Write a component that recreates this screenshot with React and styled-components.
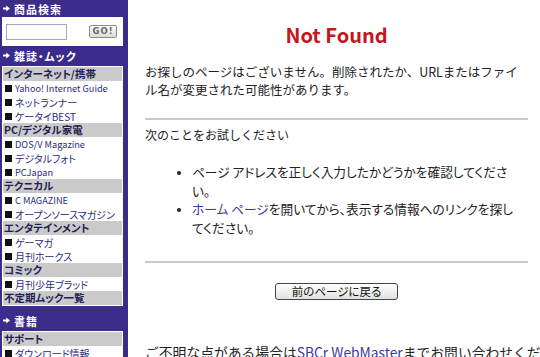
import styled, { createGlobalStyle } from "styled-components";

const GlobalStyle = createGlobalStyle`
  html, body {
    margin: 0;
    padding: 0;
    background: #ffffff;
    overflow: hidden;
  }
  body {
    font-family: "Noto Sans CJK JP", "Noto Sans", sans-serif;
  }
`;

const Page = styled.div`
  display: grid;
  grid-template-columns: 128px minmax(0, 1fr);
  width: 540px;
  height: 357px;
  overflow: hidden;
`;

const Sidebar = styled.aside`
  background: #3b2b8b;
  display: flex;
  flex-direction: column;
  padding: 0 5px 0 2px;
  font-feature-settings: "palt";
`;

const SectionTitle = styled.div`
  display: flex;
  align-items: center;
  gap: 4px;
  height: 17px;
  margin-top: ${({ $top }) => $top || 0}px;
  padding-left: 1px;
  color: #ffffff;
  font-size: 11px;
  font-weight: 700;
  letter-spacing: 1px;
  white-space: nowrap;
`;

const Arrow = () => (
  <svg width="7" height="7" viewBox="0 0 7 7">
    <path d="M0 2.5h3.2V0.4L7 3.5 3.2 6.6V4.5H0z" fill="#ffffff" />
  </svg>
);

const WhiteBox = styled.div`
  background: #ffffff;
  padding: 1px;
  margin-top: ${({ $top }) => $top || 0}px;
`;

const SearchBox = styled(WhiteBox)`
  display: flex;
  align-items: center;
  justify-content: space-between;
  height: 29px;
  padding: 0 6px 0 4px;
`;

const SearchInput = styled.div`
  width: 59px;
  height: 14px;
  border: 1px solid #9aaac8;
  background: #ffffff;
`;

const GoButton = styled.div`
  width: 26px;
  height: 11px;
  border: 1px solid #8c8c8c;
  border-radius: 2px;
  background: linear-gradient(#fafafa, #dcdcdc);
  color: #666666;
  font-family: "DejaVu Sans", "Liberation Sans", sans-serif;
  font-size: 8.5px;
  font-weight: 700;
  line-height: 11px;
  text-align: center;
  letter-spacing: 1px;
`;

const GroupHead = styled.div`
  height: 14px;
  line-height: 14px;
  background: #cacaca;
  color: #1e1e55;
  font-size: 10.5px;
  font-weight: 700;
  padding-left: 1px;
  white-space: nowrap;
  overflow: hidden;
`;

const Item = styled.div`
  display: flex;
  align-items: center;
  gap: 2px;
  height: 14px;
  padding-left: 2px;
  color: #2d2b82;
  font-size: ${({ $latin }) => ($latin ? "9.2px" : "10px")};
  white-space: nowrap;
  overflow: hidden;
`;

const Square = styled.span`
  display: inline-block;
  width: 7px;
  height: 7px;
  background: #111111;
  margin-right: 1px;
  flex: none;
`;

const Main = styled.main`
  padding: 0 12px 0 17px;
  color: #222222;
  line-height: 18px;
`;

const Title = styled.h1`
  margin: 23px 0 0;
  color: #c4161c;
  font-size: 20px;
  font-weight: 700;
  line-height: 24px;
  text-align: center;
`;

const Para = styled.p`
  margin: ${({ $top }) => $top}px 0 0;
  font-size: ${({ $size }) => $size}px;
  white-space: ${({ $nowrap }) => ($nowrap ? "nowrap" : "normal")};
`;

const Rule = styled.hr`
  margin: ${({ $top }) => $top}px 0 0;
  border: none;
  height: 2px;
  background: #cbcbc3;
`;

const List = styled.ul`
  margin: 19px 0 0;
  padding: 0 12px 0 47px;
  font-size: 12.7px;
  line-height: 18.5px;
  font-feature-settings: "palt";
  li::marker {
    font-size: 11px;
  }
`;

const Link = styled.a`
  color: #3a3aa0;
  text-decoration: none;
`;

const ButtonRow = styled.div`
  display: flex;
  justify-content: center;
  margin-top: 20px;
`;

const BackButton = styled.button`
  width: 123px;
  height: 17px;
  padding: 0;
  border: 1px solid #3c4468;
  border-radius: 3px;
  background: linear-gradient(#ffffff, #e2e2dc);
  color: #111111;
  font-family: "Noto Sans CJK JP", sans-serif;
  font-feature-settings: "palt";
  font-size: 11.5px;
  line-height: 15px;
`;

const groups = [
  {
    head: "インターネット/携帯",
    items: [
      { label: "Yahoo! Internet Guide", latin: true },
      { label: "ネットランナー" },
      { label: "ケータイBEST" },
    ],
  },
  {
    head: "PC/デジタル家電",
    items: [
      { label: "DOS/V Magazine", latin: true },
      { label: "デジタルフォト" },
      { label: "PCJapan", latin: true },
    ],
  },
  {
    head: "テクニカル",
    items: [
      { label: "C MAGAZINE", latin: true },
      { label: "オープンソースマガジン" },
    ],
  },
  {
    head: "エンタテインメント",
    items: [{ label: "ゲーマガ" }, { label: "月刊ホークス" }],
  },
  {
    head: "コミック",
    items: [{ label: "月刊少年ブラッド" }],
  },
  { head: "不定期ムック一覧", items: [] },
];

const App = () => (
  <>
    <GlobalStyle />
    <Page>
      <Sidebar>
        <SectionTitle>
          <Arrow />
          商品検索
        </SectionTitle>
        <SearchBox>
          <SearchInput />
          <GoButton>GO!</GoButton>
        </SearchBox>
        <SectionTitle $top={1}>
          <Arrow />
          雑誌・ムック
        </SectionTitle>
        <WhiteBox $top={2}>
          {groups.map((g) => (
            <div key={g.head}>
              <GroupHead>{g.head}</GroupHead>
              {g.items.map((it) => (
                <Item key={it.label} $latin={it.latin}>
                  <Square />
                  {it.label}
                </Item>
              ))}
            </div>
          ))}
        </WhiteBox>
        <SectionTitle $top={6}>
          <Arrow />
          書籍
        </SectionTitle>
        <WhiteBox $top={2}>
          <GroupHead>サポート</GroupHead>
          <Item>
            <Square />
            ダウンロード情報
          </Item>
        </WhiteBox>
      </Sidebar>

      <Main>
        <Title>Not Found</Title>
        <Para $top={16} $size={12.5}>
          お探しのページはございません。削除されたか、URLまたはファイル名が変更された可能性があります。
        </Para>
        <Rule $top={19} />
        <Para $top={6} $size={12}>
          次のことをお試しください
        </Para>
        <List>
          <li>ページ アドレスを正しく入力したかどうかを確認してください。</li>
          <li>
            <Link href="#">ホーム ページ</Link>
            を開いてから、表示する情報へのリンクを探してください。
          </li>
        </List>
        <Rule $top={24} />
        <ButtonRow>
          <BackButton>前のページに戻る</BackButton>
        </ButtonRow>
        <Para $top={43} $size={13.8} $nowrap>
          ご不明な点がある場合は<Link href="#">SBCr WebMaster</Link>までお問い合わせください。
        </Para>
      </Main>
    </Page>
  </>
);

export default App;
